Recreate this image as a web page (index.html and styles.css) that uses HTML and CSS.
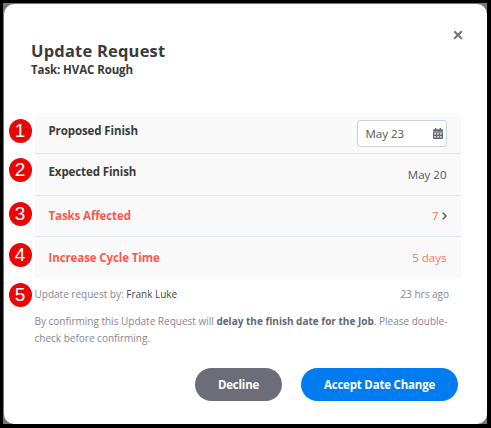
FILE: index.html
```html
<!DOCTYPE html>
<html lang="en">
    <head>
        <meta charset="utf-8">
        <title>Update Request</title>
        <link rel="stylesheet" href="styles.css">
    </head>
    <body>
        <main class="modal">
            <button type="button" class="close" aria-label="Close">
                <svg width="10" height="10" viewBox="0 0 10 10"><path d="M1.2 1.2 8.8 8.8M8.8 1.2 1.2 8.8"/></svg>
            </button>

            <header>
                <h1>Update Request</h1>
                <h2>Task: HVAC Rough</h2>
            </header>

            <ul class="details">
                <li>
                    <i class="badge">1</i>
                    <b>Proposed Finish</b>
                    <div class="date">
                        <span>May 23</span>
                        <svg width="10" height="11" viewBox="0 0 11 12">
                            <path d="M2.2 0h1.5v1.4h3.6V0h1.5v1.4H10a1 1 0 0 1 1 1V4H0V2.4a1 1 0 0 1 1-1h1.2z"/>
                            <path fill-rule="evenodd" d="M0 4.6h11V11a1 1 0 0 1-1 1H1a1 1 0 0 1-1-1zM1.4 5.7v1.4h2V5.7zm3.1 0v1.4h2V5.7zm3.1 0v1.4h2V5.7zM1.4 8.9v1.4h2V8.9zm3.1 0v1.4h2V8.9zm3.1 0v1.4h2V8.9z"/>
                        </svg>
                    </div>
                </li>
                <li class="expected">
                    <i class="badge">2</i>
                    <b>Expected Finish</b>
                    <span class="value">May 20</span>
                </li>
                <li class="alert">
                    <i class="badge">3</i>
                    <b>Tasks Affected</b>
                    <span class="value">7
                        <svg class="chevron" width="5" height="8" viewBox="0 0 5 8"><path d="M.8.8 4 4 .8 7.2"/></svg>
                    </span>
                </li>
                <li class="alert">
                    <i class="badge">4</i>
                    <b>Increase Cycle Time</b>
                    <span class="value">5 days</span>
                </li>
            </ul>

            <div class="meta">
                <i class="badge">5</i>
                <span>Update request by: <em>Frank Luke</em></span>
                <span>23 hrs ago</span>
            </div>

            <p class="note">By confirming this Update Request will <b>delay the finish date for the Job</b>. Please double-<br>check before confirming.</p>

            <footer>
                <button type="button" class="decline">Decline</button>
                <button type="button" class="accept">Accept Date Change</button>
            </footer>
        </main>
    </body>
</html>
```

FILE: styles.css
```css
* { box-sizing: border-box; }

body {
    background: #777;
    border: solid #000;
    border-width: 3px 4px 4px 3px;
    color: #3a3a3a;
    font-family: "Open Sans", sans-serif;
    font-size: 11.5px;
    height: 428px;
    margin: 0;
    overflow: hidden;
    padding: 1px 0 0 1px;
}

button { border: 0; font: inherit; padding: 0; }

.modal {
    background: #fff;
    border-radius: 10px;
    height: 420px;
    padding: 37px 27px 0 30.5px;
    position: relative;
    width: 483px;
}

.close {
    background: none;
    height: 10px;
    position: absolute;
    right: 24px;
    top: 26px;
    width: 10px;

    svg { display: block; fill: none; stroke: #777; stroke-width: 2.1; }
}

header {
    height: 72px;
    margin-left: -3.5px;

    h1, h2 { font-weight: 700; margin: 0; }
    h1 { font-size: 16.5px; letter-spacing: .2px; line-height: 20px; }
    h2 { font-size: 11.5px; letter-spacing: -.1px; line-height: 18px; }
}

.details {
    background: #f9f9f9;
    border-radius: 4px;
    height: 165px;
    list-style: none;
    margin: 0;
    padding: 0;
    width: 426px;

    li {
        align-items: center;
        display: flex;
        height: 41.5px;
        justify-content: space-between;
        padding: 0 14px;
        position: relative;
    }
    li + li { border-top: 1px solid #dce3f3; }
    li:first-child { height: 40px; padding-bottom: 4px; }
    li:first-child b { margin-top: -1px; }
    b { font-weight: 700; letter-spacing: -.1px; }
    .expected b { margin-top: -5px; }
}

.badge {
    background: #e90606;
    border-radius: 50%;
    color: #fff;
    font: 19px/24px "Liberation Sans", sans-serif;
    height: 24px;
    left: -26px;
    position: absolute;
    text-align: center;
    top: 6px;
    width: 23px;
}
.expected .badge { top: 4px; }

.date {
    align-items: center;
    background: #fff;
    border: 1px solid #ccd1df;
    border-radius: 3px;
    color: #555;
    display: flex;
    height: 27px;
    justify-content: space-between;
    margin-top: 4px;
    padding: 0 3px 0 8px;
    width: 90px;

    svg { fill: #666773; }
}

.value { color: #555; }
.alert { color: #f9594f; }
.alert .value { color: #f9716a; }
.chevron { fill: none; stroke: #555; stroke-width: 1.4; }

.meta, .note { color: #858591; font-size: 10px; }

.meta {
    display: flex;
    height: 33px;
    justify-content: space-between;
    line-height: 33px;
    position: relative;
    width: 414.5px;

    em { color: #444; font-style: normal; }
    .badge { top: 5px; }
}

.note {
    line-height: 16.7px;
    margin: 2px 0 0;
    white-space: nowrap;

    b { color: #666773; }
}

footer {
    display: flex;
    gap: 19px;
    justify-content: flex-end;
    margin: 22px 2px 0 0;

    button {
        border-radius: 17px;
        color: #fff;
        font-size: 11.5px;
        font-weight: 700;
        height: 33px;
        letter-spacing: -.2px;
    }
    .decline { background: #6c6d79; width: 87px; }
    .accept { background: #007bf0; width: 157px; }
}
```
